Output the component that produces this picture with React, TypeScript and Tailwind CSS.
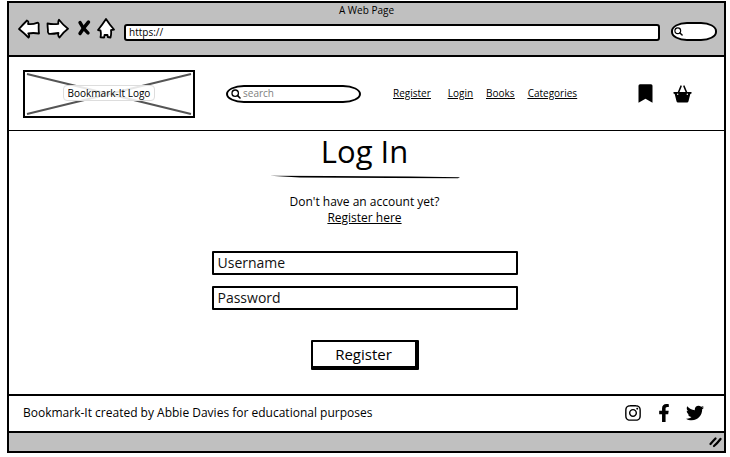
import type { ReactNode } from "react";
import { FaFacebookF, FaInstagram, FaTwitter } from "react-icons/fa";

const FONT = "font-['Open_Sans','Noto_Sans',sans-serif]";

function BackIcon() {
  return (
    <svg width="22" height="21" viewBox="0 0 22 21" fill="#fff" stroke="#000" strokeWidth="1.8" strokeLinejoin="round" aria-hidden="true">
      <path d="M1 11 Q4 7.500 9 2.500 Q11 3 10 6 Q15 6.500 19 4.800 Q21 4.500 20.700 7 Q20.500 12 21 15.500 Q15 14.500 10.300 15.500 Q12 18 10.500 19.500 Q6 15 1 11 Z" />
    </svg>
  );
}

function ForwardIcon() {
  return (
    <svg width="23" height="21" viewBox="0 0 23 21" fill="#fff" stroke="#000" strokeWidth="1.8" strokeLinejoin="round" aria-hidden="true">
      <path d="M1.500 5.500 Q7 6.500 12.300 5.800 Q12 3.500 13 1.800 Q17 7 22 10.800 Q17 14.500 13.500 19.500 Q11.500 17.500 12.500 15 Q7 16 3 15.800 Q1.500 14.500 2 12.500 Q1.500 8 1.500 5.500 Z" />
    </svg>
  );
}

function StopIcon() {
  return (
    <svg width="14" height="21" viewBox="0 0 14 21" fill="none" stroke="#000" strokeWidth="3.400" strokeLinecap="round" aria-hidden="true">
      <path d="M3 4.500 Q6 11 11 15" />
      <path d="M11.500 4 Q7.500 8.500 3 15.500" />
    </svg>
  );
}

function HomeIcon() {
  return (
    <svg width="18" height="21" viewBox="0 0 18 21" fill="#fff" stroke="#000" strokeWidth="1.800" strokeLinejoin="round" aria-hidden="true">
      <path d="M9 1 Q12.500 6.500 17 11.500 L14 12.200 Q14.500 16 13.500 19.500 L10.800 19 L10.500 17 L7.500 17 L7.200 19.500 L3.500 19.300 Q4.300 16 3.500 12.500 L1 12 Q5.500 6.500 9 1 Z" />
    </svg>
  );
}

function SearchIcon({ size }: { size: number }) {
  return (
    <svg width={size} height={size} viewBox="0 0 10 10" fill="none" stroke="#000" strokeWidth="1.300" strokeLinecap="round" className="shrink-0" aria-hidden="true">
      <circle cx="4.200" cy="4.200" r="3.200" />
      <path d="M6.600 6.600 L9 9" strokeWidth="1.600" />
    </svg>
  );
}

function BookmarkIcon() {
  return (
    <svg width="15" height="19" viewBox="0 0 15 19" aria-hidden="true">
      <path d="M0.500 1.800 Q0.500 0.300 2 0.300 L13 0.300 Q14.500 0.300 14.500 1.800 L14.500 18.700 L7.500 14.700 L0.500 18.700 Z" />
    </svg>
  );
}

function BasketIcon() {
  return (
    <svg width="19" height="18" viewBox="0 0 19 18" aria-hidden="true">
      <path d="M0.500 7 L18.500 7 L18.500 8.500 L17.300 9 L15.500 16.300 Q15.200 17.500 14 17.500 L5 17.500 Q3.800 17.500 3.500 16.300 L1.700 9 L0.500 8.500 Z" />
      <path d="M5 8.500 L8 1.200 M14 8.500 L11 1.200" fill="none" stroke="#000" strokeWidth="1.600" strokeLinecap="round" />
      <circle cx="4.700" cy="9.200" r="0.700" fill="#fff" />
      <circle cx="14.300" cy="9.200" r="0.700" fill="#fff" />
    </svg>
  );
}

function ToolButton({ label, children }: { label: string; children: ReactNode }) {
  return (
    <button type="button" aria-label={label} className="shrink-0">
      {children}
    </button>
  );
}

function BrowserBar() {
  return (
    <div className="border-b-2 border-black bg-[#c0c0c0] pb-3.5">
      <p className="h-[15px] text-center text-[10px] leading-[15px]">A Web Page</p>
      <div className="flex pl-[9px] pr-[7px]">
        <div className="flex items-start">
          <ToolButton label="Back"><BackIcon /></ToolButton>
          <span className="w-1.5" />
          <ToolButton label="Forward"><ForwardIcon /></ToolButton>
          <span className="w-2" />
          <ToolButton label="Stop"><StopIcon /></ToolButton>
          <span className="w-1.5" />
          <ToolButton label="Home"><HomeIcon /></ToolButton>
        </div>
        <input
          aria-label="Address"
          defaultValue="https://"
          className="ml-[9px] mt-1.5 h-[17px] min-w-0 flex-1 rounded-[3px] border-2 border-black bg-white px-[3px] pb-0.5 text-[10px] leading-3 outline-none"
        />
        <label className="ml-[11px] mt-1 flex h-[19px] w-[46px] items-center rounded-[16px/9px] border-2 border-black bg-white pl-px">
          <SearchIcon size={9} />
          <input type="search" aria-label="Web search" className="w-full min-w-0 bg-transparent text-[10px] outline-none" />
        </label>
      </div>
    </div>
  );
}

function SiteHeader() {
  return (
    <header className="flex h-[74px] items-center border-b border-black pl-3.5 pr-8">
      <div className="relative flex h-12 w-[172px] items-center justify-center border-2 border-black pb-0.5">
        <svg className="absolute inset-0 h-full w-full" viewBox="0 0 168 44" preserveAspectRatio="none" stroke="#555" strokeWidth="2" aria-hidden="true">
          <path d="M2 2 L166 42 M2 42 L166 2" />
        </svg>
        <span className="relative rounded-sm border border-[#ddd] bg-white/85 px-1 text-[10px] leading-[14px]">Bookmark-It Logo</span>
      </div>
      <label className="ml-[31px] flex h-[18px] w-[135px] items-center gap-0.5 rounded-[18px/9px] border-2 border-black pl-[3px]">
        <SearchIcon size={10} />
        <input type="search" aria-label="Search books" placeholder="search" className="h-3.5 min-w-0 flex-1 bg-transparent pb-0.5 text-[10px] leading-3 outline-none placeholder:text-[#808080]" />
      </label>
      <nav className="ml-8 flex gap-[13px] pb-0.5 text-[10px] leading-4 underline">
        <a href="#register" className="mr-1">Register</a>
        <a href="#login">Login</a>
        <a href="#books">Books</a>
        <a href="#categories">Categories</a>
      </nav>
      <div className="ml-auto flex items-center gap-5">
        <a href="#bookmarks" aria-label="Bookmarks"><BookmarkIcon /></a>
        <a href="#basket" aria-label="Basket"><BasketIcon /></a>
      </div>
    </header>
  );
}

const FIELD =
  "h-6 w-full rounded-[1px] border-2 border-black bg-white px-1 pb-0.5 text-[14px] leading-5 outline-none placeholder:text-[#111]";

function LoginForm() {
  return (
    <main className="flex flex-col items-center pb-6 pr-1">
      <h1 className="text-[31px] leading-10">Log In</h1>
      <svg width="190" height="4" viewBox="0 0 190 4" className="mt-1" aria-hidden="true">
        <path d="M0 0.800 L60 1 L140 1.500 L190 2.300 L188 3.200 L120 3 L30 2.500 Z" />
      </svg>
      <p className="mt-[15px] text-center text-[12px] leading-4">
        Don't have an account yet?
        <br />
        <a href="#register" className="underline">Register here</a>
      </p>
      <form className="mt-[25px] flex w-full max-w-[306px] flex-col items-center" onSubmit={(e) => e.preventDefault()}>
        <input aria-label="Username" placeholder="Username" className={FIELD} />
        <input type="password" aria-label="Password" placeholder="Password" className={`mt-[11px] ${FIELD}`} />
        <button type="submit" className="mt-[30px] h-[30px] w-[108px] rounded-[1px] border-b-4 border-l-2 border-r-4 border-t-2 border-black bg-white text-[15px] leading-5">
          Register
        </button>
      </form>
    </main>
  );
}

function SiteFooter() {
  return (
    <footer className="flex h-[37px] items-center justify-between border-t-2 border-black pb-0.5 pl-3.5 pr-5">
      <p className="text-[12px] leading-4">Bookmark-It created by Abbie Davies for educational purposes</p>
      <div className="flex items-center gap-[13px]">
        <a href="#instagram" aria-label="Instagram"><FaInstagram size={18} /></a>
        <a href="#facebook" aria-label="Facebook"><FaFacebookF size={18} /></a>
        <a href="#twitter" aria-label="Twitter"><FaTwitter size={18} /></a>
      </div>
    </footer>
  );
}

export default function App() {
  return (
    <div className={`${FONT} bg-white pb-1 pl-[7px] pr-1 pt-px text-black`}>
      <div className="border-2 border-black">
        <BrowserBar />
        <SiteHeader />
        <LoginForm />
        <SiteFooter />
        <div className="flex h-5 items-center justify-end border-t-2 border-black bg-[#c0c0c0] pr-0.5">
          <svg width="13" height="12" viewBox="0 0 13 12" fill="none" stroke="#000" strokeWidth="2.200" strokeLinecap="round" aria-hidden="true">
            <path d="M1.500 8 Q4 5 6.500 2.500" />
            <path d="M5 10 Q8.500 7 11.500 3" />
          </svg>
        </div>
      </div>
    </div>
  );
}
